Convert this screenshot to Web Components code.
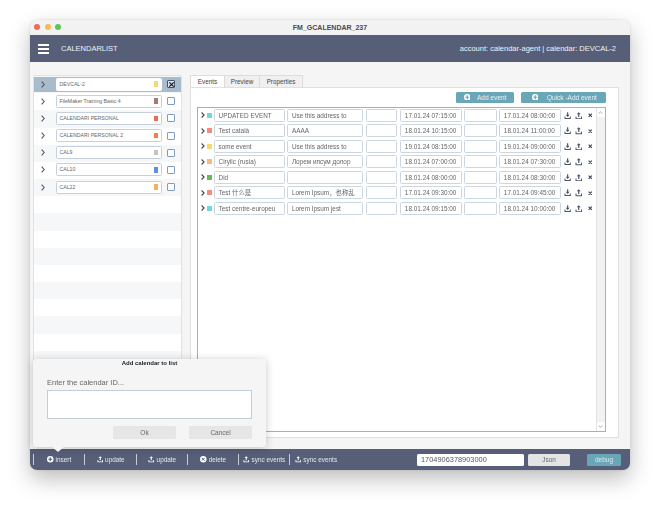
<!DOCTYPE html>
<html>
<head>
<meta charset="utf-8">
<style>
    html, body { margin: 0; background: #fff; }
    body { padding: 20px 30px; width: 600px; height: 470px; box-sizing: content-box; overflow: hidden; font-family: "Liberation Sans", "Noto Sans CJK SC", sans-serif; }
</style>
</head>
<body>
<fm-window>
    <fm-titlebar slot="title">FM_GCALENDAR_237</fm-titlebar>
    <fm-header slot="header" list="CALENDARLIST" info="account: calendar-agent | calendar: DEVCAL-2"></fm-header>
    <cal-list slot="left">
        <cal-row name="DEVCAL-2" color="#f7d774" selected></cal-row>
        <cal-row name="FileMaker Training Basic 4" color="#a87c6c"></cal-row>
        <cal-row name="CALENDARI PERSONAL" color="#ec6a5c"></cal-row>
        <cal-row name="CALENDARI PERSONAL 2" color="#f08050"></cal-row>
        <cal-row name="CAL9" color="#c4c4c4"></cal-row>
        <cal-row name="CAL10" color="#5f8fe0"></cal-row>
        <cal-row name="CAL22" color="#f4b060"></cal-row>
    </cal-list>
    <event-panel slot="right">
        <event-row title="UPDATED EVENT" note="Use this address to" color="#6fd8dc" from="17.01.24 07:15:00" to="17.01.24 08:00:00"></event-row>
        <event-row title="Test català" note="AAAA" color="#f58a80" from="18.01.24 10:15:00" to="18.01.24 11:00:00"></event-row>
        <event-row title="some event" note="Use this address to" color="#f9d86a" from="19.01.24 08:15:00" to="19.01.24 09:00:00"></event-row>
        <event-row title="Cirylic (rusia)" note="Лорем ипсум долор" color="#f8ba78" from="18.01.24 07:00:00" to="18.01.24 07:30:00"></event-row>
        <event-row title="Did" note="" color="#6cb850" from="18.01.24 08:00:00" to="18.01.24 08:30:00"></event-row>
        <event-row title="Test 什么是" note="Lorem Ipsum，也称乱" color="#f58a80" from="17.01.24 09:30:00" to="17.01.24 09:45:00"></event-row>
        <event-row title="Test centre-europeu" note="Lorem Ipsum jest" color="#6fd8dc" from="18.01.24 09:15:00" to="18.01.24 10:00:00"></event-row>
    </event-panel>
    <fm-footer slot="footer" stamp="1704906378903000"></fm-footer>
    <add-popover slot="popover"></add-popover>
</fm-window>

<script>
// <use> does not cross into shadow roots, so the icons are plain strings
const svg = (size, body) => `<svg width="${size}" height="${size}" viewBox="0 0 10 10" fill="currentColor">${body}</svg>`;
const TRAY_UP = (size) => svg(size, '<path d="M5 .3 2.300 3h1.900v3.500h1.600V3h1.900zM.7 6v3.600h8.600V6H8v2.300H2V6z"/>');
const TRAY_DOWN = (size) => svg(size, '<path d="M4.200.3h1.600v3.400h1.900L5 6.700 2.300 3.700h1.900zM.7 6v3.600h8.600V6H8v2.300H2V6z"/>');
const PLUS = (size, hole) => svg(size, `<circle cx="5" cy="5" r="5"/><path d="M4.100 2h1.800v2.100H8v1.800H5.900V8H4.100V5.900H2V4.100h2.100z" fill="${hole}"/>`);
const X_CIRCLE = (size, hole) => svg(size, `<circle cx="5" cy="5" r="5"/><path d="M3 3l4 4M7 3 3 7" stroke="${hole}" stroke-width="1.500"/>`);

class FmWindow extends HTMLElement {
    constructor() {
        super();
        this.attachShadow({ mode: 'open' });
        this.shadowRoot.innerHTML = `
            <style>
                :host {
                    display: flex;
                    flex-direction: column;
                    position: relative;
                    width: 600px;
                    height: 450px;
                    background: #f5f5f5;
                    border-radius: 7px;
                    box-shadow: 0 9px 22px rgba(0,0,0,0.26), 0 0 3px rgba(0,0,0,0.12);
                    font-family: "Liberation Sans", "Noto Sans CJK SC", sans-serif;
                    filter: blur(0.25px);
                }
                .main {
                    flex: 1;
                    min-height: 0;
                    display: grid;
                    grid-template-columns: 149px 429px;
                    column-gap: 8px;
                    padding: 13px 0 4px 3px;
                }
                ::slotted([slot="right"]) { margin-bottom: 7px; }
            </style>
            <slot name="title"></slot>
            <slot name="header"></slot>
            <div class="main">
                <slot name="left"></slot>
                <slot name="right"></slot>
            </div>
            <slot name="footer"></slot>
            <slot name="popover"></slot>
        `;
    }
}

class FmTitlebar extends HTMLElement {
    constructor() {
        super();
        this.attachShadow({ mode: 'open' });
        this.shadowRoot.innerHTML = `
            <style>
                :host {
                    display: flex;
                    align-items: center;
                    justify-content: center;
                    position: relative;
                    height: 15px;
                    background: #f2f2f2;
                    border-radius: 7px 7px 0 0;
                    font-size: 7px;
                    font-weight: bold;
                    color: #4a4a4a;
                }
                .lights { position: absolute; left: 4px; top: 4px; display: flex; gap: 4.500px; }
                .lights i { width: 6px; height: 6px; border-radius: 50%; }
            </style>
            <div class="lights">
                <i style="background:#ee6a5f"></i><i style="background:#f5bd4f"></i><i style="background:#61c454"></i>
            </div>
            <slot></slot>
        `;
    }
}

class FmHeader extends HTMLElement {
    constructor() {
        super();
        this.attachShadow({ mode: 'open' });
    }
    connectedCallback() {
        this.shadowRoot.innerHTML = `
            <style>
                :host {
                    display: flex;
                    align-items: center;
                    height: 27px;
                    padding: 0 14px 0 8px;
                    background: #565f77;
                    color: #f2f3f6;
                    font-size: 7.500px;
                }
                .burger { width: 11px; display: flex; flex-direction: column; gap: 2px; margin-right: 12px; }
                .burger i { height: 2px; background: #fff; }
                .info { margin-left: auto; }
            </style>
            <div class="burger"><i></i><i></i><i></i></div>
            <span>${this.getAttribute('list')}</span>
            <span class="info">${this.getAttribute('info')}</span>
        `;
    }
}

class CalList extends HTMLElement {
    constructor() {
        super();
        this.attachShadow({ mode: 'open' });
        this.shadowRoot.innerHTML = `
            <style>
                :host {
                    display: block;
                    box-sizing: border-box;
                    border: 1px solid #dfe3e8;
                    border-radius: 2px;
                    background: repeating-linear-gradient(#f6f7f9 0 17.170px, #fff 17.170px 34.340px);
                    overflow: hidden;
                }
            </style>
            <slot></slot>
        `;
    }
}

class CalRow extends HTMLElement {
    constructor() {
        super();
        this.attachShadow({ mode: 'open' });
    }
    connectedCallback() {
        const selected = this.hasAttribute('selected');
        this.shadowRoot.innerHTML = `
            <style>
                :host {
                    display: flex;
                    align-items: center;
                    box-sizing: border-box;
                    height: 17.170px;
                    padding: 0 5px 1px 7px;
                    color: #666;
                    font-size: 5.200px;
                    ${selected ? 'background: linear-gradient(#a9bccb, #a9bccb) center top 0.500px / 100% 15.400px no-repeat;' : ''}
                }
                svg { display: block; }
                .name {
                    display: flex;
                    align-items: center;
                    box-sizing: border-box;
                    width: 106px;
                    height: 13px;
                    margin-left: 10.500px;
                    padding: 0 2.500px 0 3px;
                    background: #fff;
                    border: 0.700px solid ${selected ? '#fff' : '#c6d0dc'};
                    border-radius: 1.500px;
                }
                .name span { flex: 1; margin-top: -1px; }
                .name i { width: 4px; height: 5.500px; background: ${this.getAttribute('color')}; }
                .check {
                    box-sizing: border-box;
                    width: ${selected ? 8.5 : 8}px;
                    height: ${selected ? 8.5 : 8}px;
                    margin-left: 5px;
                    border: 0.800px solid ${selected ? '#44566a' : '#7e9cc6'};
                    border-radius: 1px;
                    background: ${selected ? '#d8e2ec' : '#fff'};
                }
            </style>
            <svg width="4" height="7" viewBox="0 0 4 7"><path d="M.6.6 3.200 3.500.6 6.400" fill="none" stroke="#4c5668" stroke-width="1.100"/></svg>
            <div class="name"><span>${this.getAttribute('name')}</span><i></i></div>
            <div class="check">${selected ? '<svg width="7" height="7" viewBox="0 0 8 8"><path d="M1.500 1.500l5 5M6.500 1.500l-5 5" stroke="#111" stroke-width="1.300"/></svg>' : ''}</div>
        `;
    }
}

class EventPanel extends HTMLElement {
    constructor() {
        super();
        this.attachShadow({ mode: 'open' });
        this.shadowRoot.innerHTML = `
            <style>
                :host {
                    display: flex;
                    flex-direction: column;
                    min-height: 0;
                    font-size: 6.400px;
                    color: #555;
                }
                .tabs { display: flex; height: 12px; }
                .tab {
                    box-sizing: border-box;
                    height: 12px;
                    display: flex;
                    align-items: center;
                    justify-content: center;
                    border: 0.700px solid #dcdcdc;
                    border-width: 0.700px 0.700px 0 0;
                    background: #f0f0f0;
                    color: #444;
                    font-size: 6.300px;
                }
                .tab.on { background: #fff; border-left-width: 0.700px; }
                .body {
                    flex: 1;
                    min-height: 0;
                    display: flex;
                    flex-direction: column;
                    background: #fff;
                    border: 0.700px solid #e0e0e0;
                    padding: 3.500px 12.500px 5px 5.500px;
                }
                .tools { display: flex; justify-content: flex-end; gap: 6.500px; height: 11px; margin-bottom: 4px; }
                .list {
                    flex: 1;
                    position: relative;
                    box-sizing: border-box;
                    border: 0.700px solid #a8aebc;
                }
                .bar {
                    position: absolute;
                    right: 0; top: 0; bottom: 0;
                    width: 9px;
                    box-sizing: border-box;
                    background: #f2f2f2;
                    border-left: 0.700px solid #e4e4e4;
                }
                .bar span {
                    position: absolute;
                    left: 0; right: 0;
                    height: 9px;
                    background: #fff;
                    display: flex;
                    align-items: center;
                    justify-content: center;
                }
                .bar .up { top: 0; }
                .bar .down { bottom: 0; }
                .btn {
                    display: flex;
                    align-items: center;
                    height: 11px;
                    box-sizing: border-box;
                    background: #68a6b8;
                    border-radius: 1.500px;
                    color: #e9f2f5;
                    font-size: 6.500px;
                }
                .btn svg { color: #fff; display: block; }
            </style>
            <div class="tabs">
                <div class="tab on" style="width:35px">Events</div>
                <div class="tab" style="width:35px">Preview</div>
                <div class="tab" style="width:43px">Properties</div>
            </div>
            <div class="body">
                <div class="tools">
                    <div class="btn" style="width:58.500px;padding-left:8px;gap:7px">${PLUS(6.5, '#68a6b8')}Add event</div>
                    <div class="btn" style="width:85px;padding-left:11px;gap:9px">${PLUS(6.5, '#68a6b8')}Quick -Add event</div>
                </div>
                <div class="list">
                    <slot></slot>
                    <div class="bar">
                        <span class="up"><svg width="5" height="3" viewBox="0 0 5 3"><path d="M.6 2.500 2.500.8 4.400 2.500" fill="none" stroke="#888" stroke-width=".7"/></svg></span>
                        <span class="down"><svg width="5" height="3" viewBox="0 0 5 3"><path d="M.6.5 2.500 2.200 4.400.5" fill="none" stroke="#888" stroke-width=".7"/></svg></span>
                    </div>
                </div>
            </div>
        `;
    }
}

class EventRow extends HTMLElement {
    constructor() {
        super();
        this.attachShadow({ mode: 'open' });
    }
    connectedCallback() {
        const a = (n) => this.getAttribute(n) || '';
        this.shadowRoot.innerHTML = `
            <style>
                :host {
                    display: flex;
                    align-items: center;
                    height: 15.500px;
                    padding-left: 3.900px;
                    color: #666;
                    font-size: 6.400px;
                }
                svg { display: block; flex: none; }
                .sw { width: 4.500px; height: 5px; margin: 0 2.200px 0 2px; background: ${a('color')}; }
                .f {
                    box-sizing: border-box;
                    height: 13px;
                    flex: none;
                    display: flex;
                    align-items: center;
                    padding: 0 3.500px;
                    background: #fff;
                    border: 0.800px solid #ccd6e0;
                    border-radius: 1.500px;
                    white-space: nowrap;
                    overflow: hidden;
                }
                .ico { color: #4c5668; }
            </style>
            <svg width="4" height="6" viewBox="0 0 4 6"><path d="M.6.5 3.100 3 .6 5.500" fill="none" stroke="#3f4858" stroke-width="1.100"/></svg>
            <i class="sw"></i>
            <div class="f" style="width:71px;margin-right:2.300px">${a('title')}</div>
            <div class="f" style="width:76px;margin-right:2.400px">${a('note')}</div>
            <div class="f" style="width:31.600px;margin-right:3px"></div>
            <div class="f" style="width:62px;margin-right:2px">${a('from')}</div>
            <div class="f" style="width:32.400px;margin-right:2.600px"></div>
            <div class="f" style="width:61.400px;margin-right:3.300px">${a('to')}</div>
            <span class="ico" style="margin-right:3.700px">${TRAY_DOWN(7.3)}</span>
            <span class="ico" style="margin-right:5px">${TRAY_UP(7.5)}</span>
            <svg width="4.500" height="4.500" viewBox="0 0 5 5"><path d="M.7.7l3.600 3.600M4.300.7.7 4.300" stroke="#3f4858" stroke-width="1.300"/></svg>
        `;
    }
}

class FmFooter extends HTMLElement {
    constructor() {
        super();
        this.attachShadow({ mode: 'open' });
    }
    connectedCallback() {
        const hole = '#565f77';
        this.shadowRoot.innerHTML = `
            <style>
                :host {
                    display: flex;
                    align-items: center;
                    height: 21px;
                    padding: 0 9px 0 3px;
                    background: ${hole};
                    border-radius: 0 0 7px 7px;
                    color: #e6e8ee;
                    font-size: 6.400px;
                }
                .t {
                    display: flex;
                    align-items: center;
                    justify-content: center;
                    gap: 2px;
                    height: 11px;
                    border-left: 0.700px solid #c8ccd6;
                    white-space: nowrap;
                }
                .t:last-of-type { border-right: 0.700px solid #c8ccd6; }
                svg { display: block; color: #fff; }
                .stamp {
                    box-sizing: border-box;
                    width: 107px;
                    height: 12px;
                    margin-left: auto;
                    padding: 0 4.500px;
                    display: flex;
                    align-items: center;
                    background: #fff;
                    border-radius: 1.500px;
                    color: #555;
                    font-size: 7.400px;
                }
                .json {
                    width: 42px; height: 12px; margin-left: 4.500px;
                    display: flex; align-items: center; justify-content: center;
                    background: #e4e4e4; border-radius: 1.500px; color: #666; font-size: 6.400px;
                }
                .debug {
                    width: 34px; height: 12px; margin-left: 17px;
                    display: flex; align-items: center; justify-content: center;
                    background: #68a6b8; border-radius: 1.500px; color: #dcecf0; font-size: 6.500px;
                }
            </style>
            <div class="t" style="width:50.300px">${PLUS(6.5, hole)}insert</div>
            <div class="t" style="width:50.700px">${TRAY_UP(6.5)}update</div>
            <div class="t" style="width:50.300px">${TRAY_UP(6.5)}update</div>
            <div class="t" style="width:49.700px">${X_CIRCLE(6.5, hole)}delete</div>
            <div class="t" style="width:50.300px">${TRAY_UP(6.5)}sync events</div>
            <div class="t" style="width:51.400px">${TRAY_UP(6.5)}sync events</div>
            <div class="stamp">${this.getAttribute('stamp')}</div>
            <div class="json">Json</div>
            <div class="debug">debug</div>
        `;
    }
}

class AddPopover extends HTMLElement {
    constructor() {
        super();
        this.attachShadow({ mode: 'open' });
        this.shadowRoot.innerHTML = `
            <style>
                :host {
                    position: absolute;
                    left: 3px;
                    top: 339px;
                    width: 233px;
                    height: 88px;
                    box-sizing: border-box;
                    padding: 0 14px;
                    background: #f5f5f5;
                    border-radius: 3px;
                    box-shadow: 0 1px 8px rgba(0,0,0,0.22);
                    display: flex;
                    flex-direction: column;
                    color: #666;
                }
                :host::after {
                    content: "";
                    position: absolute;
                    left: 19px;
                    bottom: -5px;
                    border: 6px solid transparent;
                    border-bottom: 0;
                    border-top: 5px solid #f5f5f5;
                }
                h4 { margin: 0; font-size: 6px; line-height: 8px; text-align: center; color: #222; }
                label { margin-top: 10.500px; font-size: 7.500px; line-height: 9px; }
                .in { height: 29px; margin-top: 3px; box-sizing: border-box; background: #fff; border: 0.700px solid #c2ced9; }
                .btns { display: flex; justify-content: flex-end; gap: 13px; margin-top: 7.500px; }
                .btns div {
                    width: 63px; height: 13px; display: flex; align-items: center; justify-content: center;
                    background: #e6e6e6; border-radius: 1.500px; font-size: 6.500px;
                }
            </style>
            <h4>Add calendar to list</h4>
            <label>Enter the calendar ID...</label>
            <div class="in"></div>
            <div class="btns"><div>Ok</div><div>Cancel</div></div>
        `;
    }
}

customElements.define('fm-window', FmWindow);
customElements.define('fm-titlebar', FmTitlebar);
customElements.define('fm-header', FmHeader);
customElements.define('cal-list', CalList);
customElements.define('cal-row', CalRow);
customElements.define('event-panel', EventPanel);
customElements.define('event-row', EventRow);
customElements.define('fm-footer', FmFooter);
customElements.define('add-popover', AddPopover);
</script>
</body>
</html>
